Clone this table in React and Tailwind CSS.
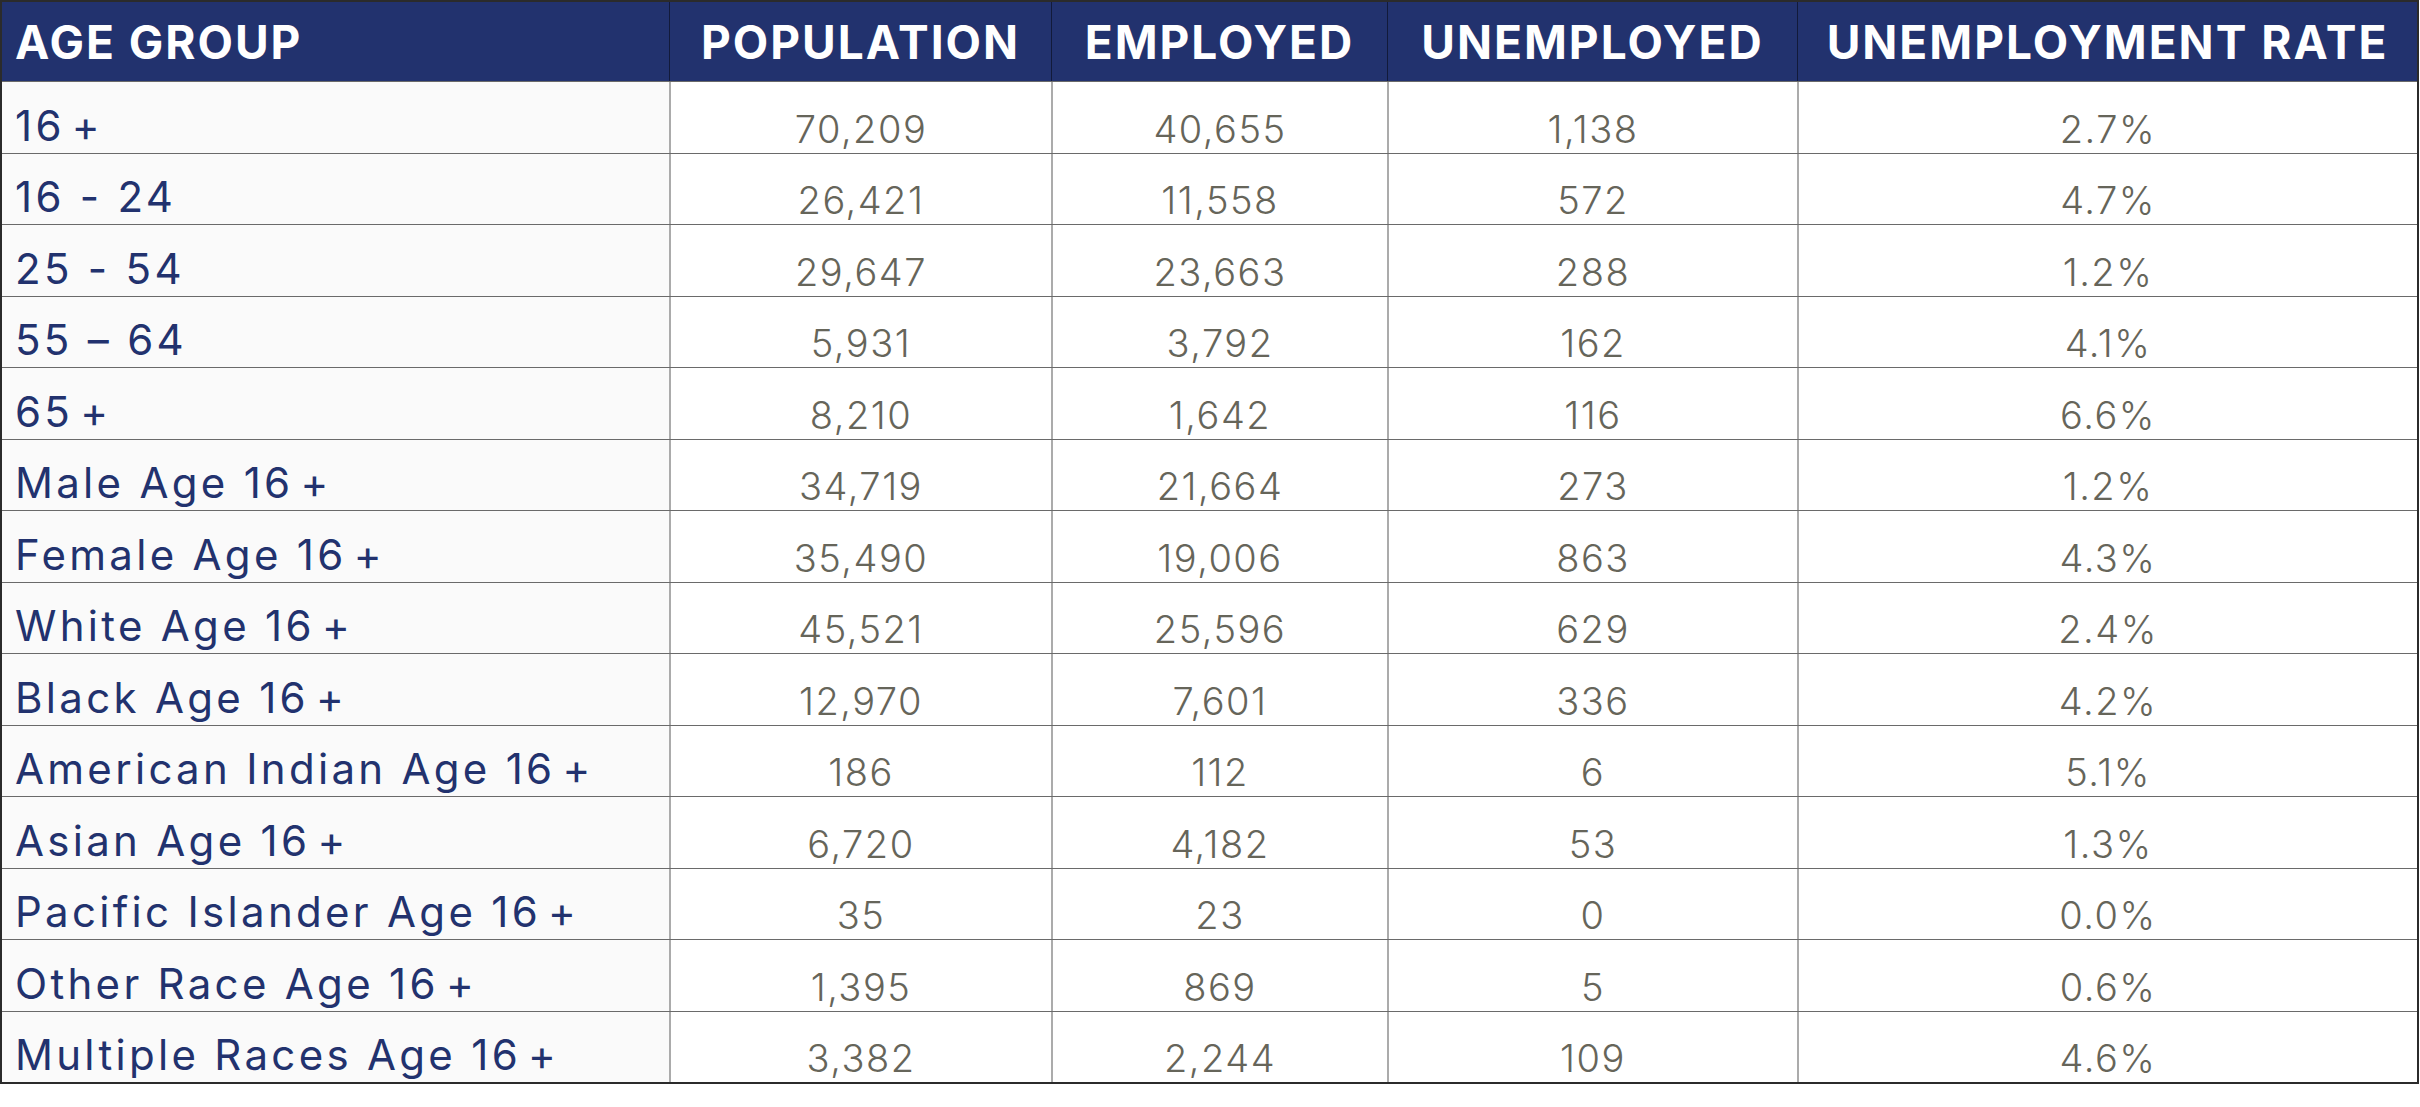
const ROWS = [
  ["16+", "70,209", "40,655", "1,138", "2.7%"],
  ["16 - 24", "26,421", "11,558", "572", "4.7%"],
  ["25 - 54", "29,647", "23,663", "288", "1.2%"],
  ["55 – 64", "5,931", "3,792", "162", "4.1%"],
  ["65+", "8,210", "1,642", "116", "6.6%"],
  ["Male Age 16+", "34,719", "21,664", "273", "1.2%"],
  ["Female Age 16+", "35,490", "19,006", "863", "4.3%"],
  ["White Age 16+", "45,521", "25,596", "629", "2.4%"],
  ["Black Age 16+", "12,970", "7,601", "336", "4.2%"],
  ["American Indian Age 16+", "186", "112", "6", "5.1%"],
  ["Asian Age 16+", "6,720", "4,182", "53", "1.3%"],
  ["Pacific Islander Age 16+", "35", "23", "0", "0.0%"],
  ["Other Race Age 16+", "1,395", "869", "5", "0.6%"],
  ["Multiple Races Age 16+", "3,382", "2,244", "109", "4.6%"],
]

const HEADERS = ["AGE GROUP", "POPULATION", "EMPLOYED", "UNEMPLOYED", "UNEMPLOYMENT RATE"]

const cols = "grid grid-cols-[667px_382px_336px_410px_1fr]"

// the source sets a small gap before the plus sign
const label = (s) => s.replace("+", "\u200A+")

export default function App() {
  return (
    <div className="bg-white w-[2420px] h-[1107px] font-['Inter','Liberation_Sans',sans-serif]">
      <div className="w-[2419px] border-2 border-[#2b2b2b]">

        {/* Header */}
        <div className={`${cols} h-[79px] bg-[#22326e]`}>
          {HEADERS.map((h, i) => (
            <div
              key={h}
              className={`flex items-end pb-[16px] text-white font-bold text-[46px] leading-none tracking-[2px] ${
                i === 0 ? "pl-[13px]" : "justify-center border-l border-[#121a3a]"
              }`}
            >
              {h}
            </div>
          ))}
        </div>

        {/* Body rows */}
        {ROWS.map((r) => (
          <div key={r[0]} className={`${cols} h-[71.5px] border-t border-[#6a6a6a]`}>
            <div className="flex items-end pb-[6px] pl-[13px] bg-[#fafafa] text-[#22326e] text-[42px] leading-none tracking-[3.3px]">
              {label(r[0])}
            </div>
            {r.slice(1).map((v, i) => (
              <div
                key={i}
                className="flex items-end justify-center pb-[5px] border-l-2 border-[#ababab] text-[#66655a] font-light text-[38px] leading-none tracking-[1.5px]"
              >
                {v}
              </div>
            ))}
          </div>
        ))}

      </div>
    </div>
  )
}
